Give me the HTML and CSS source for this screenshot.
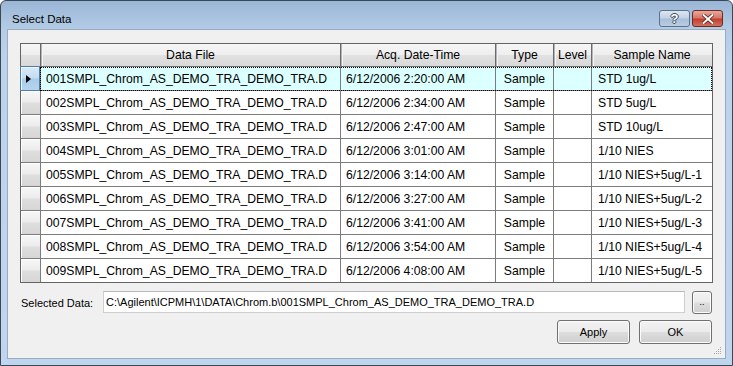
FILE: index.html
```html
<!DOCTYPE html>
<html>
<head>
<meta charset="utf-8">
<link rel="stylesheet" href="styles.css">
</head>
<body>
<div class="window">
  <div class="titlebar">
    <span class="title">Select Data</span>
    <div class="tbtns">
      <span class="tbtn help">?</span>
      <span class="tbtn close">
        <svg width="12" height="10" viewBox="0 0 12 10"><path d="M1.5 1 L10.5 9 M10.5 1 L1.5 9" stroke="#5a2018" stroke-width="3.6" stroke-linecap="square"/><path d="M1.5 1 L10.5 9 M10.5 1 L1.5 9" stroke="#ffffff" stroke-width="2" stroke-linecap="square"/></svg>
      </span>
    </div>
  </div>
  <div class="client">
    <div class="grid">
      <div class="row head">
        <div class="rh"></div>
        <div class="c">Data File</div>
        <div class="c">Acq. Date-Time</div>
        <div class="c">Type</div>
        <div class="c">Level</div>
        <div class="c">Sample Name</div>
      </div>
      <div class="row sel">
        <div class="rh"><span class="tri"></span></div>
        <div class="c">001SMPL_Chrom_AS_DEMO_TRA_DEMO_TRA.D</div>
        <div class="c">6/12/2006 2:20:00 AM</div>
        <div class="c ctr">Sample</div>
        <div class="c"></div>
        <div class="c sn">STD 1ug/L</div>
      </div>
      <div class="row">
        <div class="rh"></div>
        <div class="c">002SMPL_Chrom_AS_DEMO_TRA_DEMO_TRA.D</div>
        <div class="c">6/12/2006 2:34:00 AM</div>
        <div class="c ctr">Sample</div>
        <div class="c"></div>
        <div class="c sn">STD 5ug/L</div>
      </div>
      <div class="row">
        <div class="rh"></div>
        <div class="c">003SMPL_Chrom_AS_DEMO_TRA_DEMO_TRA.D</div>
        <div class="c">6/12/2006 2:47:00 AM</div>
        <div class="c ctr">Sample</div>
        <div class="c"></div>
        <div class="c sn">STD 10ug/L</div>
      </div>
      <div class="row">
        <div class="rh"></div>
        <div class="c">004SMPL_Chrom_AS_DEMO_TRA_DEMO_TRA.D</div>
        <div class="c">6/12/2006 3:01:00 AM</div>
        <div class="c ctr">Sample</div>
        <div class="c"></div>
        <div class="c sn">1/10 NIES</div>
      </div>
      <div class="row">
        <div class="rh"></div>
        <div class="c">005SMPL_Chrom_AS_DEMO_TRA_DEMO_TRA.D</div>
        <div class="c">6/12/2006 3:14:00 AM</div>
        <div class="c ctr">Sample</div>
        <div class="c"></div>
        <div class="c sn">1/10 NIES+5ug/L-1</div>
      </div>
      <div class="row">
        <div class="rh"></div>
        <div class="c">006SMPL_Chrom_AS_DEMO_TRA_DEMO_TRA.D</div>
        <div class="c">6/12/2006 3:27:00 AM</div>
        <div class="c ctr">Sample</div>
        <div class="c"></div>
        <div class="c sn">1/10 NIES+5ug/L-2</div>
      </div>
      <div class="row">
        <div class="rh"></div>
        <div class="c">007SMPL_Chrom_AS_DEMO_TRA_DEMO_TRA.D</div>
        <div class="c">6/12/2006 3:41:00 AM</div>
        <div class="c ctr">Sample</div>
        <div class="c"></div>
        <div class="c sn">1/10 NIES+5ug/L-3</div>
      </div>
      <div class="row">
        <div class="rh"></div>
        <div class="c">008SMPL_Chrom_AS_DEMO_TRA_DEMO_TRA.D</div>
        <div class="c">6/12/2006 3:54:00 AM</div>
        <div class="c ctr">Sample</div>
        <div class="c"></div>
        <div class="c sn">1/10 NIES+5ug/L-4</div>
      </div>
      <div class="row last">
        <div class="rh"></div>
        <div class="c">009SMPL_Chrom_AS_DEMO_TRA_DEMO_TRA.D</div>
        <div class="c">6/12/2006 4:08:00 AM</div>
        <div class="c ctr">Sample</div>
        <div class="c"></div>
        <div class="c sn">1/10 NIES+5ug/L-5</div>
      </div>
    </div>
    <div class="pathrow">
      <span class="label">Selected Data:</span>
      <div class="textbox">C:\Agilent\ICPMH\1\DATA\Chrom.b\001SMPL_Chrom_AS_DEMO_TRA_DEMO_TRA.D</div>
      <span class="btn browse">..</span>
    </div>
    <div class="actions">
      <span class="btn action">Apply</span>
      <span class="btn action">OK</span>
    </div>
    <div class="grip">
      <svg width="8" height="8" viewBox="0 0 8 8" fill="#a8a8a8">
        <rect x="6" y="0" width="1" height="1"/>
        <rect x="4" y="2" width="1" height="1"/><rect x="6" y="2" width="1" height="1"/>
        <rect x="2" y="4" width="1" height="1"/><rect x="4" y="4" width="1" height="1"/><rect x="6" y="4" width="1" height="1"/>
        <rect x="0" y="6" width="1" height="1"/><rect x="2" y="6" width="1" height="1"/><rect x="4" y="6" width="1" height="1"/><rect x="6" y="6" width="1" height="1"/>
      </svg>
    </div>
  </div>
</div>
</body>
</html>
```

FILE: styles.css
```css
html, body {
  margin: 0;
  padding: 0;
  background: #ffffff;
}

.window {
  box-sizing: border-box;
  width: 733px;
  height: 366px;
  border: 1px solid #3b4656;
  border-radius: 6px 6px 0 0;
  padding: 0 6px 6px 6px;
  background: linear-gradient(to bottom, #9ab6d6 0px, #b4cce6 28px, #bcd3ec 60px, #c0d6ee 100%);
  display: flex;
  flex-direction: column;
  font-family: "Liberation Sans", Arial, sans-serif;
  color: #000;
}

.titlebar {
  height: 28px;
  flex: none;
  display: flex;
  align-items: flex-start;
  justify-content: space-between;
  padding: 0 3px 0 5px;
}

.title {
  font-size: 11.5px;
  line-height: 14px;
  margin-top: 11px;
  color: #000;
}

.tbtns {
  display: flex;
  gap: 2px;
  margin-top: 9px;
}

.tbtn {
  box-sizing: border-box;
  height: 17px;
  border-radius: 3px;
  display: flex;
  align-items: center;
  justify-content: center;
}

.help {
  width: 31px;
  border: 1px solid #5f7089;
  background: linear-gradient(to bottom, #dbe6f2 0%, #c3d3e6 45%, #aabfd8 55%, #b9cde3 100%);
  color: #fff;
  font-weight: bold;
  font-size: 13px;
  line-height: 15px;
  text-shadow: 1px 0 0 #3c4c63, -1px 0 0 #3c4c63, 0 1px 0 #3c4c63, 0 -1px 0 #3c4c63;
}

.close {
  width: 31px;
  border: 1px solid #6d2b22;
  background: linear-gradient(to bottom, #e8a99c 0%, #d7776a 45%, #c2402e 55%, #d3705f 100%);
}

.client {
  position: relative;
  flex: 1;
  box-sizing: border-box;
  border: 1px solid #97abc3;
  background: #f0f0f0;
  padding: 13px 11px 0 12px;
  display: flex;
  flex-direction: column;
}

.grid {
  box-sizing: border-box;
  width: 693px;
  border: 1px solid #646464;
  background: #fff;
  font-size: 12.2px;
}

.row {
  display: grid;
  grid-template-columns: 19px 300px 155px 58px 38px 121px;
  height: 24px;
  box-sizing: border-box;
  border-bottom: 1px solid #7c7c7c;
  position: relative;
}

.row.last {
  border-bottom: none;
  height: 23px;
}

.row.head {
  height: 23px;
  border-bottom: 1px solid #6e6e6e;
  background: linear-gradient(to bottom, #f6f6f6 0%, #eeeeee 48%, #e1e1e1 52%, #d9d9d9 100%);
}

.c {
  box-sizing: border-box;
  border-left: 1px solid #7c7c7c;
  padding-left: 5px;
  display: flex;
  align-items: center;
  white-space: nowrap;
  overflow: hidden;
}

.c.ctr {
  justify-content: center;
  padding-left: 0;
}

.c.sn {
  padding-left: 6px;
}

.head .c {
  justify-content: center;
  padding-left: 0;
  border-left: 1px solid #6a6a6a;
  box-shadow: inset 1px 0 0 #b4b4b4, inset 2px 0 0 #f4f4f4;
}

.rh {
  box-sizing: border-box;
  background: linear-gradient(to bottom, #f7f7f7 0%, #ececec 48%, #dedede 52%, #d6d6d6 100%);
  box-shadow: inset 1px 1px 0 #ffffff;
}

.head .rh {
  box-shadow: none;
  background: transparent;
}

.sel {
  background: #dcffff;
}

.sel .rh {
  border: 1px solid #4c80ac;
  margin: -1px 0 -1px -1px;
  background: linear-gradient(to bottom, #dceaf7 0%, #c3dcf1 48%, #a9cbe9 52%, #b6d4ee 100%);
  box-shadow: inset 1px 1px 0 #eef6fd;
  display: flex;
  align-items: center;
  padding-left: 5px;
}

.tri {
  width: 0;
  height: 0;
  border-top: 4px solid transparent;
  border-bottom: 4px solid transparent;
  border-left: 5px solid #000;
}

.sel::after {
  content: "";
  position: absolute;
  left: 19px;
  right: 0;
  top: 0;
  bottom: -1px;
  border: 1px dotted #000;
  pointer-events: none;
}

.pathrow {
  display: flex;
  align-items: center;
  margin-top: 8px;
  height: 23px;
  font-size: 11px;
}

.label {
  width: 82px;
  padding-left: 1px;
  flex: none;
}

.textbox {
  box-sizing: border-box;
  width: 582px;
  height: 22px;
  border: 1px solid #cfcfcf;
  border-top-color: #b9b9b9;
  background: #fff;
  padding-left: 2px;
  display: flex;
  align-items: center;
  white-space: nowrap;
  overflow: hidden;
  margin-top: -1px;
}

.btn {
  box-sizing: border-box;
  border: 1px solid #707070;
  border-radius: 3px;
  background: linear-gradient(to bottom, #f2f2f2 0%, #ebebeb 48%, #dddddd 52%, #cfcfcf 100%);
  box-shadow: inset 0 0 0 1px #fcfcfc;
  display: flex;
  align-items: center;
  justify-content: center;
  font-size: 11px;
}

.browse {
  width: 20px;
  height: 23px;
  margin-left: 7px;
  font-size: 9px;
  line-height: 9px;
  padding-bottom: 0;
}

.actions {
  display: flex;
  justify-content: flex-end;
  gap: 9px;
  margin-top: 6px;
  padding-right: 2px;
}

.action {
  width: 73px;
  height: 24px;
}

.grip {
  position: absolute;
  right: 3px;
  bottom: 3px;
  width: 8px;
  height: 8px;
  display: flex;
}
```
